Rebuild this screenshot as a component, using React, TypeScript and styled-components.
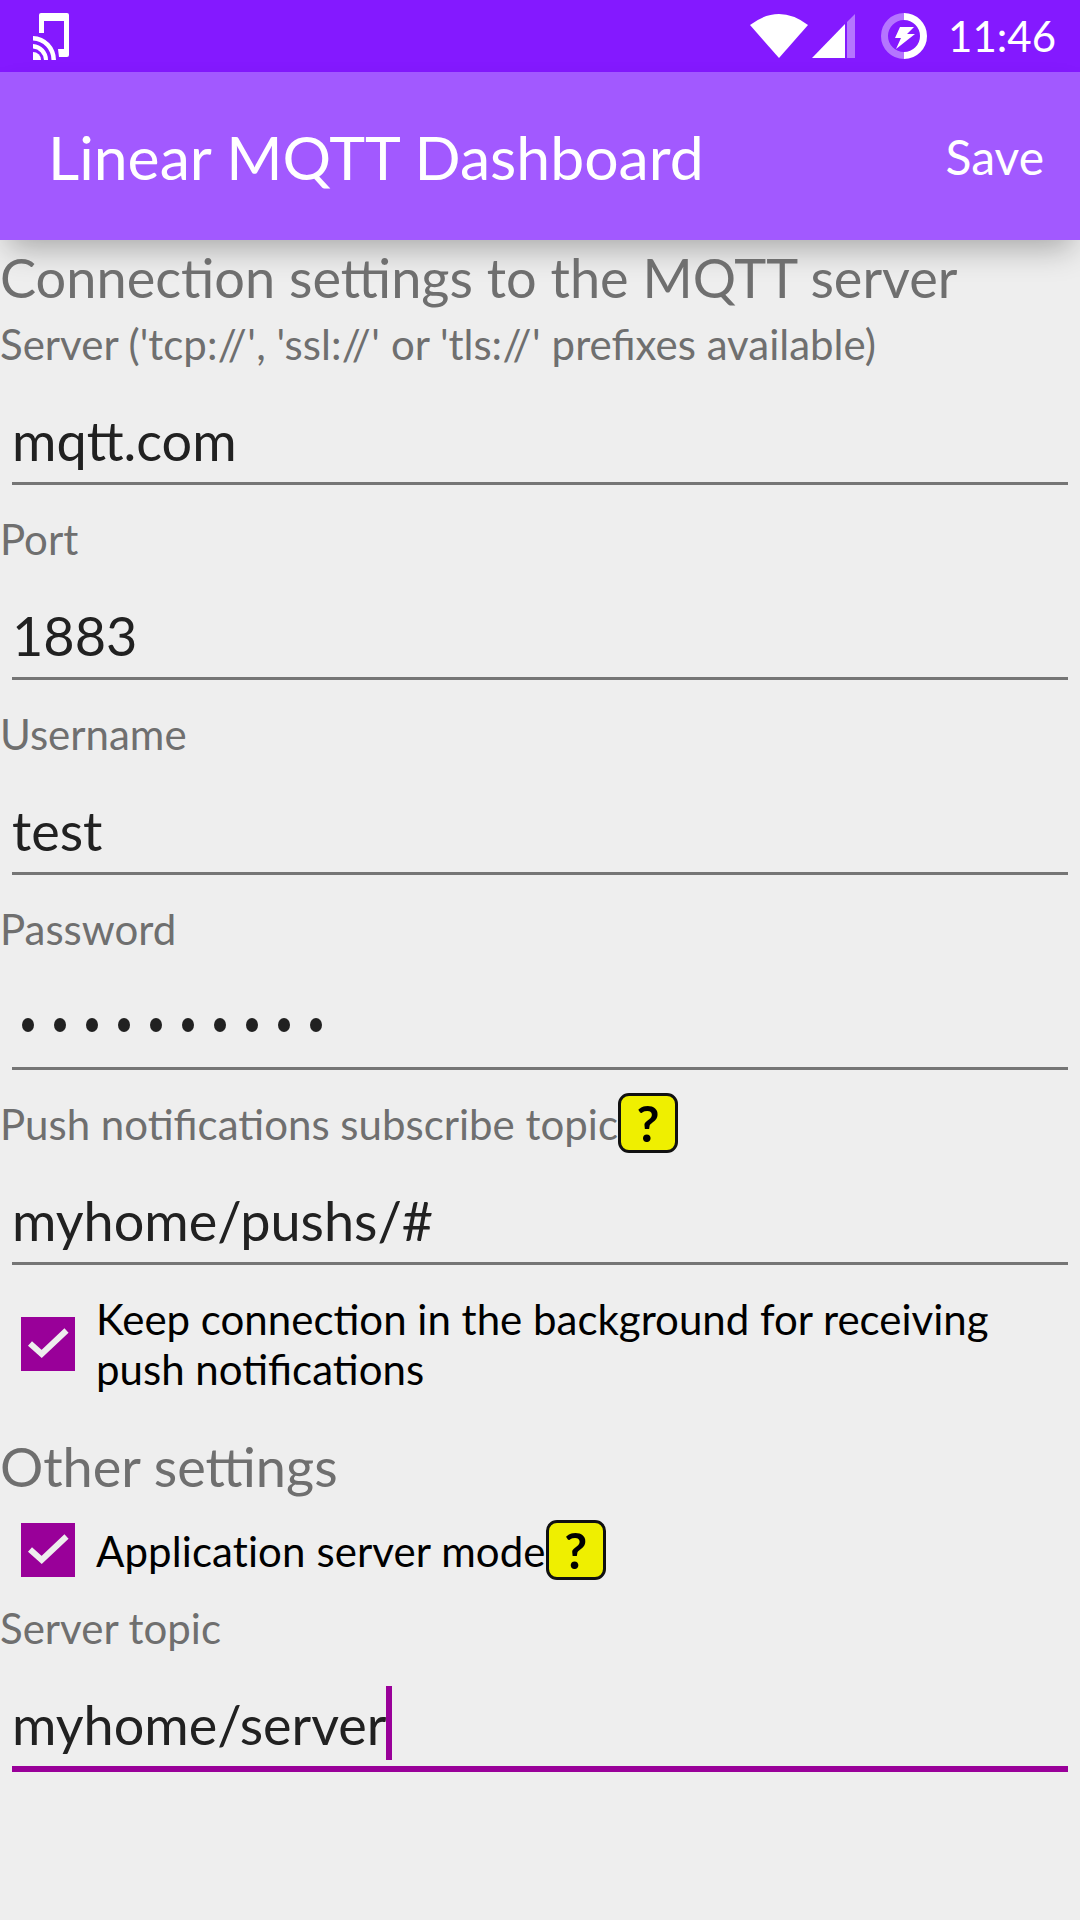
import type { ReactNode } from 'react';
import styled, { createGlobalStyle } from 'styled-components';

const GlobalStyle = createGlobalStyle`
  html, body {
    margin: 0;
    padding: 0;
    background: #eeeeee;
  }
  body {
    font-family: Lato, Carlito, "Open Sans", sans-serif;
  }
`;

const Screen = styled.div`
  width: 1080px;
  height: 1920px;
  overflow: hidden;
  background: #eeeeee;
  display: flex;
  flex-direction: column;
`;

const StatusBar = styled.div`
  height: 72px;
  background: #8419ff;
  display: flex;
  align-items: center;
  padding: 0 24px 0 33px;
  color: #fff;
`;

const CastIcon = styled.svg`
  margin-top: 1px;
`;

const StatusIcons = styled.div`
  margin-left: auto;
  display: flex;
  align-items: center;
`;

const SignalIcon = styled.svg`
  margin-left: 4px;
`;

const BatteryIcon = styled.svg`
  margin-left: 26px;
`;

const Clock = styled.div`
  font-size: 42px;
  margin-left: 21px;
`;

const AppBar = styled.div`
  height: 168px;
  background: #a259ff;
  display: flex;
  align-items: center;
  justify-content: space-between;
  padding: 0 36px 0 48px;
  color: #fff;
  box-shadow: 0 16px 30px -8px rgba(0, 0, 0, 0.3);
  position: relative;
`;

const Title = styled.div`
  font-size: 60.7px;
`;

const Action = styled.div`
  font-size: 48px;
`;

const Content = styled.div`
  display: flex;
  flex-direction: column;
  position: relative;
`;

const Heading = styled.div<{ $gap?: number }>`
  font-size: 54.1px;
  line-height: 76px;
  color: #6f6f6f;
  margin-top: ${(p) => p.$gap ?? 0}px;
`;

const HelpButton = styled.span`
  width: 60px;
  height: 60px;
  box-sizing: border-box;
  border: 3px solid #111;
  border-radius: 11px;
  background: #efef00;
  color: #000;
  font-weight: 700;
  font-size: 50px;
  display: inline-flex;
  align-items: center;
  justify-content: center;
  flex: none;
`;

const Label = styled.div`
  height: 58px;
  box-sizing: border-box;
  padding-bottom: 3px;
  font-size: 42px;
  line-height: 54px;
  color: #6f6f6f;
  display: flex;
  align-items: center;

  ${HelpButton} {
    margin-top: -1px;
  }
`;

const Slashes = styled.span`
  letter-spacing: 0.4px;
`;

const Input = styled.div<{ $active?: boolean }>`
  height: ${(p) => (p.$active ? 114 : 111)}px;
  margin: 0 12px 26px;
  padding-top: 24px;
  box-sizing: border-box;
  border-bottom: ${(p) => (p.$active ? '6px solid #990099' : '3px solid #757575')};
  display: flex;
  align-items: center;
  font-size: 54px;
  color: #212121;
`;

const Caret = styled.span`
  width: 6px;
  height: 74px;
  margin-top: -3px;
  background: #990099;
`;

const Dots = styled.div`
  display: flex;
  gap: 20px;
  padding-left: 10px;
`;

const Dot = styled.span`
  width: 12px;
  height: 14px;
  border-radius: 50%;
  background: #212121;
`;

const CheckRow = styled.div<{ $top: number; $bottom?: number }>`
  display: flex;
  align-items: center;
  margin: ${(p) => p.$top}px 0 ${(p) => p.$bottom ?? 0}px;
  padding-left: 21px;
  color: #000;
  font-size: 42px;
  line-height: 50px;
`;

const ModeText = styled.span`
  margin-top: 2px;
  letter-spacing: 0.1px;
`;

const CheckBox = styled.div`
  width: 54px;
  height: 54px;
  background: #990099;
  flex: none;
  margin-right: 21px;
`;

const Tick = () => (
  <CheckBox>
    <svg width="54" height="54" viewBox="0 0 54 54">
      <path d="M9 26.5 L20.7 37 L45.5 13.5" fill="none" stroke="#eeeeee" strokeWidth="6" />
    </svg>
  </CheckBox>
);

const Field = ({ label, value, help }: { label: ReactNode; value: string; help?: boolean }) => (
  <>
    <Label>
      {label}
      {help && <HelpButton>?</HelpButton>}
    </Label>
    <Input>{value}</Input>
  </>
);

export default function App() {
  return (
    <Screen>
      <GlobalStyle />
      <StatusBar>
        <CastIcon width="36" height="47" viewBox="0 0 36 47" fill="#fff">
          <path d="M8 0h26a2 2 0 0 1 2 2v40a2 2 0 0 1-2 2H26l-1-8h6V8H11v12H6V2a2 2 0 0 1 2-2z" />
          <path d="M0 23a24 24 0 0 1 23 24h-4.500A19.500 19.500 0 0 0 0 27.500z" />
          <path d="M0 31a16 16 0 0 1 15 16h-4A12 12 0 0 0 0 35.500z" />
          <path d="M0 39a8 8 0 0 1 8 8H0z" />
        </CastIcon>
        <StatusIcons>
          <svg width="58" height="44" viewBox="0 0 58 44" fill="#fff">
            <path d="M0 11Q29 -11 58 11L29 44z" />
          </svg>
          <SignalIcon width="43" height="44" viewBox="0 0 43 44">
            <path d="M0 44 L33 10 V44 z" fill="#fff" />
            <path d="M35 8 L43 0 V44 H35 z" fill="#fff" fillOpacity="0.4" />
          </SignalIcon>
          <BatteryIcon width="46" height="46" viewBox="0 0 46 46">
            <path d="M23 3.500a19.500 19.500 0 0 1 0 39" fill="none" stroke="#fff" strokeWidth="7" />
            <path d="M23 42.500a19.500 19.500 0 0 1 0-39" fill="none" stroke="#fff" strokeOpacity="0.4" strokeWidth="7" />
            <path d="M19 14h14l-7 7h8L15 36l5-11h-6z" fill="#fff" />
          </BatteryIcon>
          <Clock>11:46</Clock>
        </StatusIcons>
      </StatusBar>
      <AppBar>
        <Title>Linear MQTT Dashboard</Title>
        <Action>Save</Action>
      </AppBar>
      <Content>
        <Heading>Connection settings to the MQTT server</Heading>
        <Field
          label={
            <span>
              Server ('tcp<Slashes>://'</Slashes>, 'ssl<Slashes>://'</Slashes> or 'tls<Slashes>://'</Slashes> prefixes available)
            </span>
          }
          value="mqtt.com"
        />
        <Field label="Port" value="1883" />
        <Field label="Username" value="test" />
        <Label>Password</Label>
        <Input>
          <Dots>
            {Array.from({ length: 10 }).map((_, i) => (
              <Dot key={i} />
            ))}
          </Dots>
        </Input>
        <Field label="Push notifications subscribe topic" value="myhome/pushs/#" help />
        <CheckRow $top={3}>
          <Tick />
          <div>
            Keep connection in the background for receiving
            <br />
            push notifications
          </div>
        </CheckRow>
        <Heading $gap={35}>Other settings</Heading>
        <CheckRow $top={15} $bottom={20}>
          <Tick />
          <ModeText>Application server mode</ModeText>
          <HelpButton>?</HelpButton>
        </CheckRow>
        <Label>Server topic</Label>
        <Input $active>
          myhome/server
          <Caret />
        </Input>
      </Content>
    </Screen>
  );
}
